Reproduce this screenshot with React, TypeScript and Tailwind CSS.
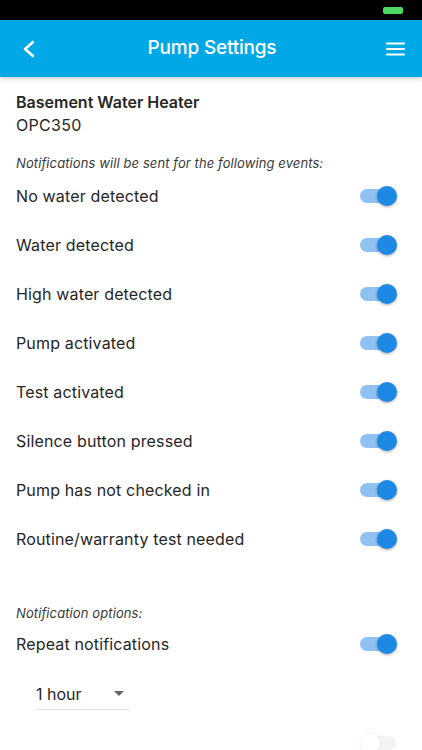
import React, { useState } from 'react';

const events = [
  'No water detected',
  'Water detected',
  'High water detected',
  'Pump activated',
  'Test activated',
  'Silence button pressed',
  'Pump has not checked in',
  'Routine/warranty test needed',
];

const Toggle: React.FC<{ on: boolean; onChange: () => void }> = ({ on, onChange }) => (
  <button onClick={onChange} className="relative w-[38px] h-[20px] flex items-center">
    <span className={`block w-[36px] h-[14px] rounded-full ${on ? 'bg-[#8fc1f2]' : 'bg-[#f4f4f4]'}`} />
    <span
      className={`absolute top-0 w-[20px] h-[20px] rounded-full ${
        on ? 'left-[17px] bg-[#1e88e5] shadow-[0_1px_3px_rgba(0,0,0,0.35)]' : 'left-0 bg-white shadow-[0_0_2px_rgba(0,0,0,0.12)]'
      }`}
    />
  </button>
);

export default function App() {
  const [flags, setFlags] = useState<boolean[]>(events.map(() => true));
  const [repeat, setRepeat] = useState(true);

  return (
    <div className="w-[422px] h-[750px] overflow-hidden bg-white font-['Inter',sans-serif] text-[#262626]">
      {/* status bar */}
      <div className="h-[20px] bg-black flex justify-end items-start pr-[19px] pt-[7px]">
        <div className="w-[20px] h-[7px] rounded-[2px] bg-[#4cd964]" />
      </div>

      {/* header */}
      <div className="h-[57px] bg-[#00a9e6] flex items-center justify-between px-[20px] shadow-[0_2px_4px_rgba(0,0,0,0.18)] relative z-10">
        <svg width="18" height="20" viewBox="0 0 18 20" fill="none" stroke="white" strokeWidth="2.6" strokeLinecap="round" strokeLinejoin="round">
          <path d="M13 3 L5 10 L13 17" />
        </svg>
        <h1 className="text-white text-[19px] font-medium tracking-[-0.2px]">Pump Settings</h1>
        <svg width="20" height="14" viewBox="0 0 20 14" fill="white" className="mr-[-4px]">
          <rect x="0" y="0.5" width="19" height="2" rx="1" />
          <rect x="0" y="6" width="19" height="2" rx="1" />
          <rect x="0" y="11.5" width="19" height="2" rx="1" />
        </svg>
      </div>

      <div className="pl-[16px] pr-[24px]">
        <div className="pt-[14px]">
          <div className="text-[16px] font-semibold leading-[22px]">Basement Water Heater</div>
          <div className="text-[16px] leading-[24px] tracking-[0.3px]">OPC350</div>
        </div>

        <div className="mt-[16px] text-[13px] italic leading-[20px] text-[#3a3a3a] tracking-[0.1px]">
          Notifications will be sent for the following events:
        </div>

        <div className="-mt-[2px]">
          {events.map((e, i) => (
            <div key={e} className="h-[49px] flex items-center justify-between">
              <span className="text-[16px] tracking-[0.15px]">{e}</span>
              <Toggle on={flags[i]} onChange={() => setFlags(flags.map((f, j) => (j === i ? !f : f)))} />
            </div>
          ))}
        </div>

        <div className="mt-[40px] text-[13px] italic leading-[20px] text-[#3a3a3a] tracking-[0.1px]">Notification options:</div>
        <div className="-mt-[4px] h-[49px] flex items-center justify-between">
          <span className="text-[16px] tracking-[0.15px]">Repeat notifications</span>
          <Toggle on={repeat} onChange={() => setRepeat(!repeat)} />
        </div>

        <div className="ml-[20px] w-[94px] h-[42px] border-b border-[#e3e3e3] flex items-center justify-between pt-[10px] pr-[6px]">
          <span className="text-[16px]">1 hour</span>
          <svg width="10" height="5" viewBox="0 0 10 5" fill="#666">
            <path d="M0 0 L10 0 L5 5 Z" />
          </svg>
        </div>

        <div className="mt-[23px] flex justify-end">
          <Toggle on={false} onChange={() => {}} />
        </div>
      </div>
    </div>
  );
}
